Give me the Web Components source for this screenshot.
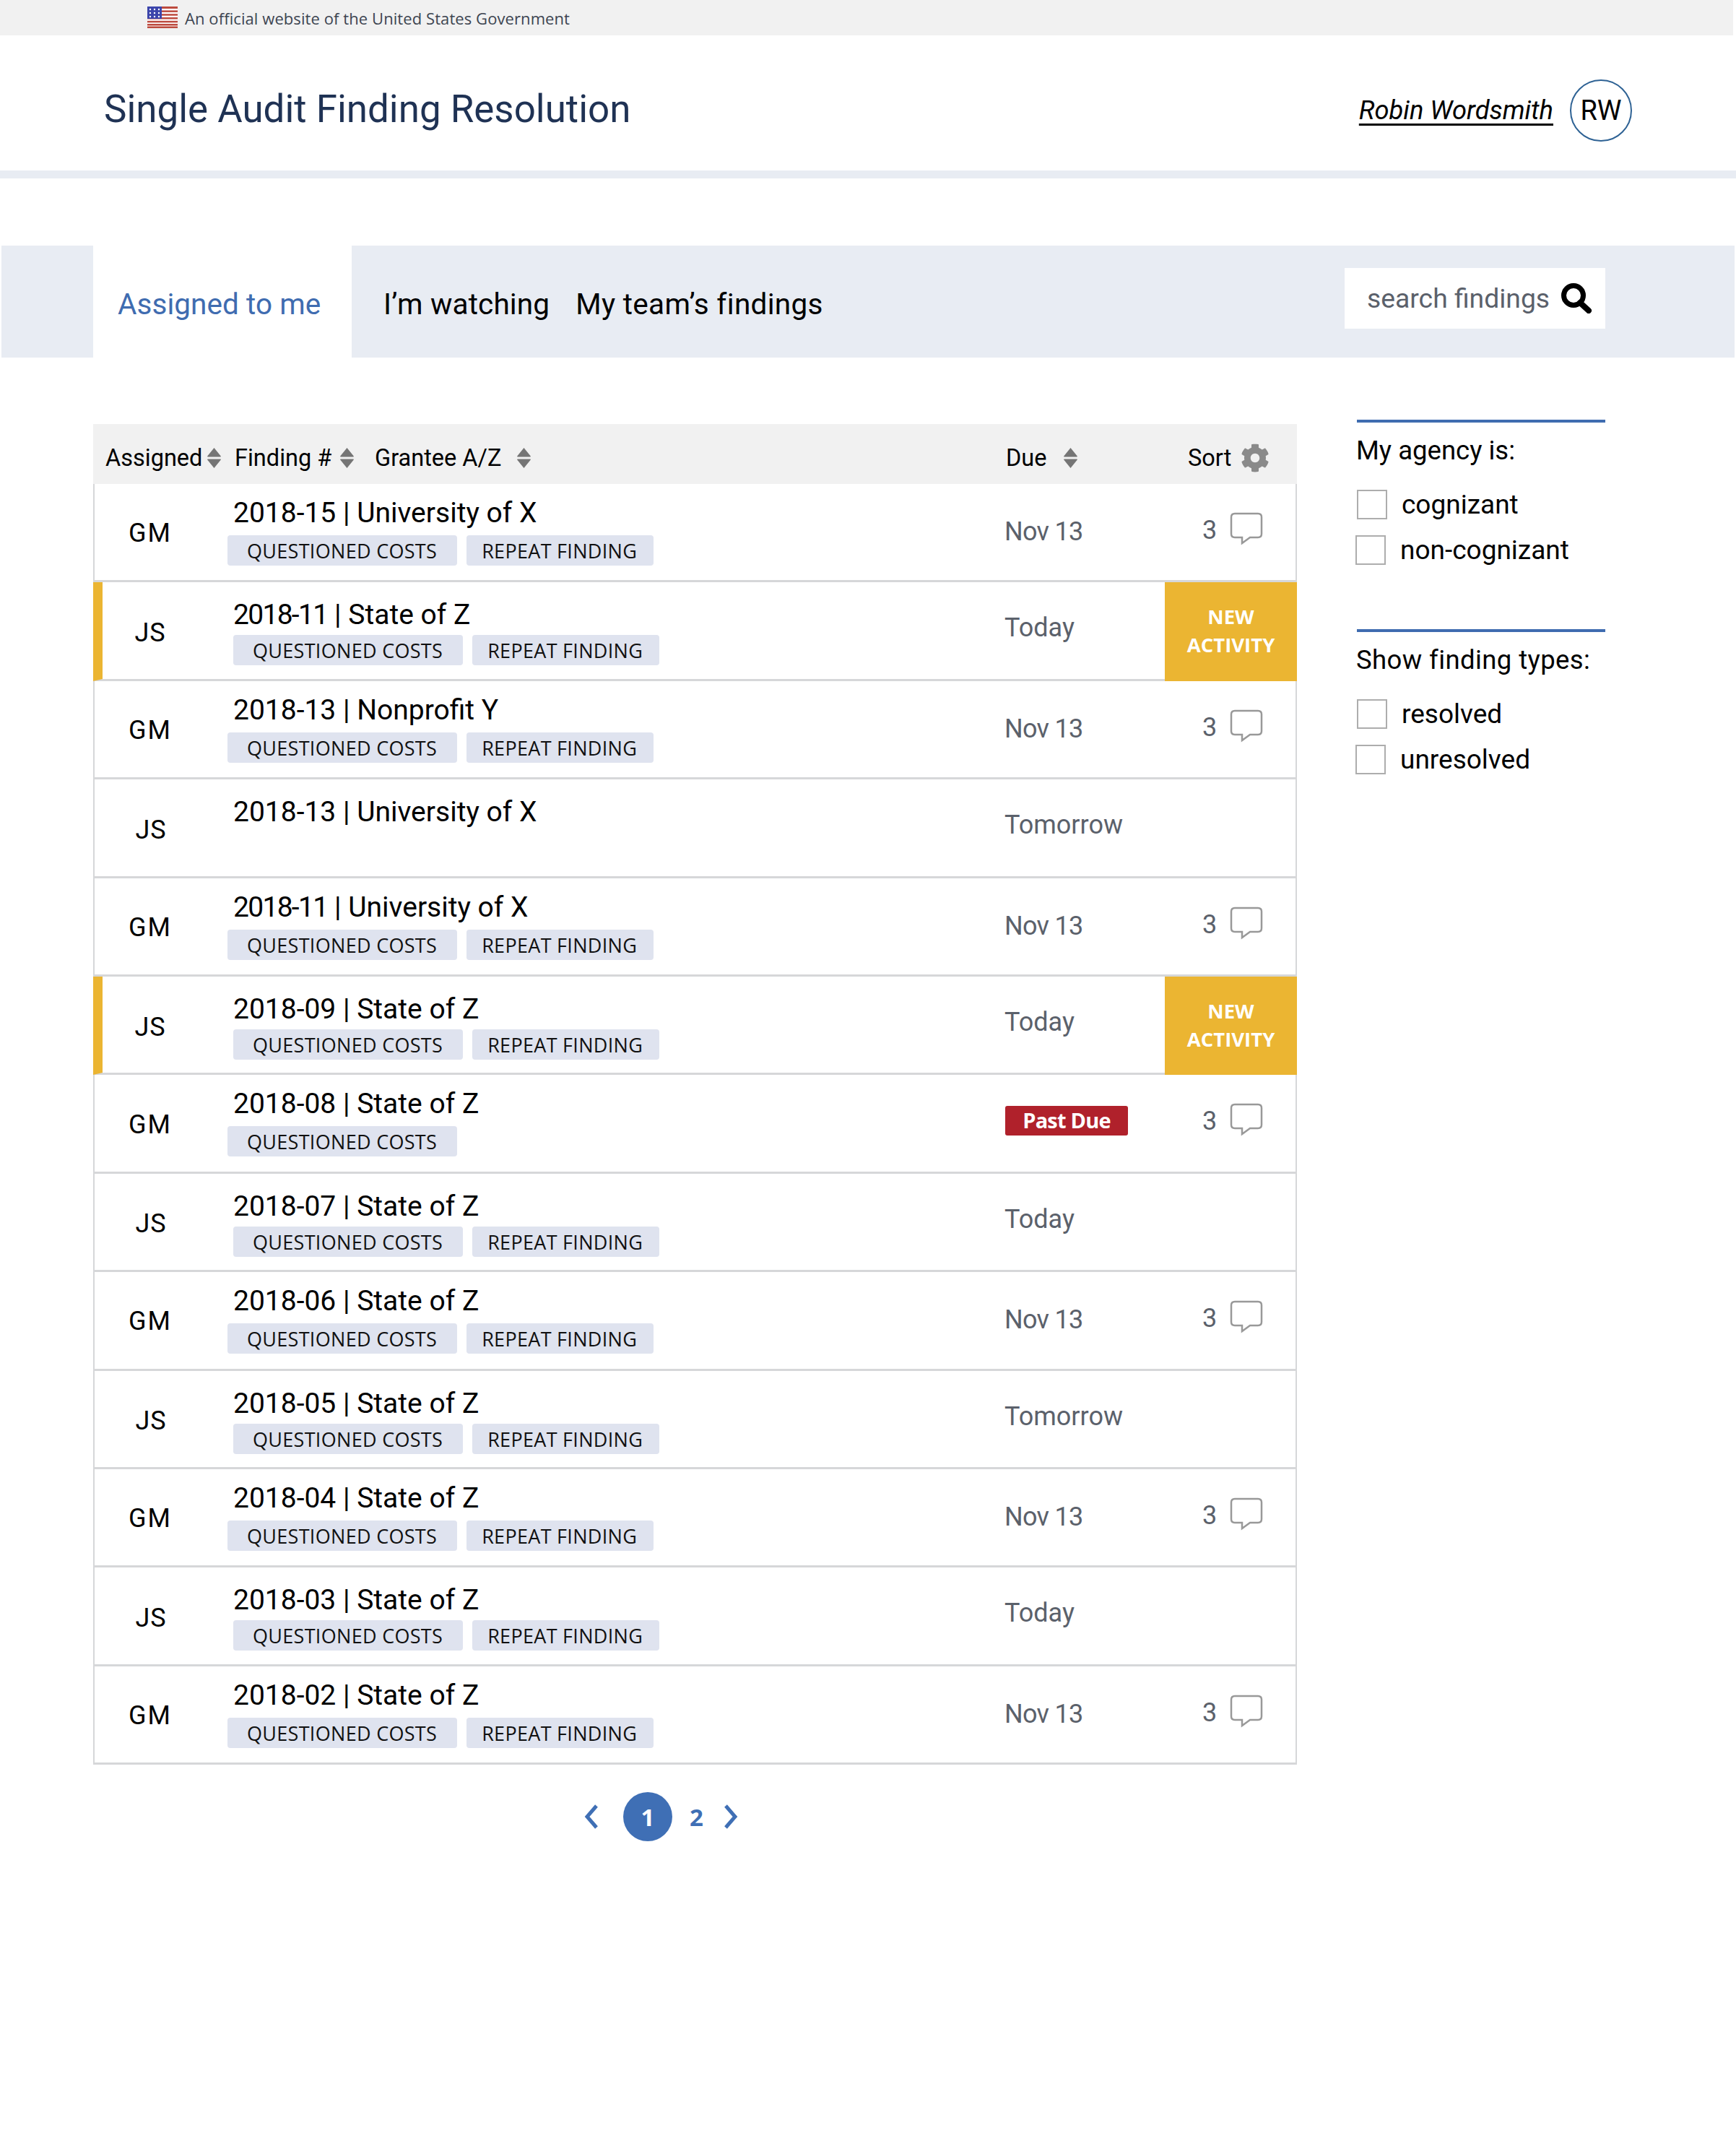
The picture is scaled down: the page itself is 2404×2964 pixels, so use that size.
<!DOCTYPE html>
<html lang="en">
<head>
<meta charset="utf-8">
<title>Single Audit Finding Resolution</title>
<style>
  html, body { margin: 0; background: #fff; }
  body { min-height: 2964px; font-family: Roboto, "Liberation Sans", sans-serif; color: #000; }
</style>
</head>
<body>
<gov-banner>An official website of the United States Government</gov-banner>
<app-header name="Robin Wordsmith" initials="RW">Single Audit Finding Resolution</app-header>
<tab-bar></tab-bar>
<main-area>
  <finding-table>
    <finding-row who="GM" name="2018-15 | University of X" due="Nov 13" comments="3"><finding-tag>QUESTIONED COSTS</finding-tag><finding-tag>REPEAT FINDING</finding-tag></finding-row>
    <finding-row who="JS" fresh tight name="2018-11 | State of Z" due="Today"><finding-tag>QUESTIONED COSTS</finding-tag><finding-tag>REPEAT FINDING</finding-tag></finding-row>
    <finding-row who="GM" name="2018-13 | Nonprofit Y" due="Nov 13" comments="3"><finding-tag>QUESTIONED COSTS</finding-tag><finding-tag>REPEAT FINDING</finding-tag></finding-row>
    <finding-row who="JS" name="2018-13 | University of X" due="Tomorrow"></finding-row>
    <finding-row who="GM" tight name="2018-11 | University of X" due="Nov 13" comments="3"><finding-tag>QUESTIONED COSTS</finding-tag><finding-tag>REPEAT FINDING</finding-tag></finding-row>
    <finding-row who="JS" fresh name="2018-09 | State of Z" due="Today"><finding-tag>QUESTIONED COSTS</finding-tag><finding-tag>REPEAT FINDING</finding-tag></finding-row>
    <finding-row who="GM" name="2018-08 | State of Z" late comments="3"><finding-tag>QUESTIONED COSTS</finding-tag></finding-row>
    <finding-row who="JS" name="2018-07 | State of Z" due="Today"><finding-tag>QUESTIONED COSTS</finding-tag><finding-tag>REPEAT FINDING</finding-tag></finding-row>
    <finding-row who="GM" name="2018-06 | State of Z" due="Nov 13" comments="3"><finding-tag>QUESTIONED COSTS</finding-tag><finding-tag>REPEAT FINDING</finding-tag></finding-row>
    <finding-row who="JS" name="2018-05 | State of Z" due="Tomorrow"><finding-tag>QUESTIONED COSTS</finding-tag><finding-tag>REPEAT FINDING</finding-tag></finding-row>
    <finding-row who="GM" name="2018-04 | State of Z" due="Nov 13" comments="3"><finding-tag>QUESTIONED COSTS</finding-tag><finding-tag>REPEAT FINDING</finding-tag></finding-row>
    <finding-row who="JS" name="2018-03 | State of Z" due="Today"><finding-tag>QUESTIONED COSTS</finding-tag><finding-tag>REPEAT FINDING</finding-tag></finding-row>
    <finding-row who="GM" name="2018-02 | State of Z" due="Nov 13" comments="3"><finding-tag>QUESTIONED COSTS</finding-tag><finding-tag>REPEAT FINDING</finding-tag></finding-row>
  </finding-table>
  <side-panel>
    <filter-group label="My agency is:"><check-option>cognizant</check-option><check-option shifted>non-cognizant</check-option></filter-group>
    <filter-group style="--label-ls:.4px" label="Show finding types:"><check-option>resolved</check-option><check-option shifted>unresolved</check-option></filter-group>
  </side-panel>
</main-area>
<page-nav></page-nav>

<script>
  const CARET = `<svg class="caret" width="21" height="28" viewBox="0 0 20 27"><path d="M10 0 L19 11 Q19.500 12 18 12 H2 Q.5 12 1 11Z M1 16 Q.5 15 2 15 H18 Q19.500 15 19 16 L10 27Z" fill="#757575"/></svg>`;
  const GEAR = `<svg width="40" height="40" viewBox="0 0 512 512"><path fill="#8a8a8a" d="M487.4 315.7l-42.6-24.6c4.3-23.2 4.3-47 0-70.2l42.6-24.6c4.9-2.8 7.1-8.6 5.5-14-11.1-35.6-30-67.8-54.7-94.6-3.8-4.1-10-5.1-14.8-2.3L380.8 110c-17.9-15.4-38.5-27.3-60.8-35.1V25.8c0-5.6-3.9-10.5-9.4-11.7-36.7-8.2-74.3-7.8-109.2 0-5.5 1.2-9.4 6.1-9.4 11.7V75c-22.2 7.9-42.8 19.8-60.8 35.1L88.7 85.5c-4.9-2.8-11-1.9-14.8 2.3-24.7 26.7-43.6 58.9-54.7 94.6-1.7 5.4.6 11.2 5.5 14L67.3 221c-4.3 23.2-4.3 47 0 70.2l-42.6 24.6c-4.9 2.8-7.1 8.6-5.5 14 11.1 35.6 30 67.8 54.7 94.6 3.8 4.1 10 5.1 14.8 2.3l42.6-24.6c17.9 15.4 38.5 27.3 60.8 35.1v49.2c0 5.6 3.9 10.5 9.4 11.7 36.7 8.2 74.3 7.8 109.2 0 5.5-1.2 9.4-6.1 9.4-11.7v-49.2c22.2-7.900 42.8-19.8 60.8-35.1l42.6 24.6c4.9 2.8 11 1.9 14.8-2.3 24.7-26.7 43.6-58.9 54.7-94.6 1.5-5.5-.7-11.3-5.6-14.1zM256 336c-44.1 0-80-35.9-80-80s35.9-80 80-80 80 35.9 80 80-35.9 80-80 80z"/></svg>`;

  class GovBanner extends HTMLElement {
    connectedCallback() {
      this.attachShadow({mode: "open"}).innerHTML = `
      <style>
        :host { display: flex; align-items: center; gap: 10px; height: 49px; padding-left: 204px; background: #f1f1f1;
          font: 22px "Open Sans", sans-serif; letter-spacing: .08px; color: #3d4551; box-sizing: border-box; margin-right: 4px; }
        svg { display: block; margin-top: -1px; }
      </style>
      <svg width="42" height="30" viewBox="0 0 42 30">
        <rect width="42" height="30" fill="#fff"/>
        <g fill="#bd4b3f"><rect width="42" height="3"/><rect y="5.400" width="42" height="2.500"/><rect y="10.200" width="42" height="2.500"/><rect y="15" width="42" height="2.500"/><rect y="19.800" width="42" height="2.500"/><rect y="24" width="42" height="2.500"/><rect y="27.500" width="42" height="2.500"/></g>
        <rect width="20" height="17" fill="#3c45ab"/>
        <g fill="#fff"><circle cx="4" cy="4" r="1.200"/><circle cx="10" cy="4" r="1.200"/><circle cx="16" cy="4" r="1.200"/><circle cx="4" cy="9" r="1.200"/><circle cx="10" cy="9" r="1.200"/><circle cx="16" cy="9" r="1.200"/><circle cx="4" cy="14" r="1.200"/><circle cx="10" cy="14" r="1.200"/><circle cx="16" cy="14" r="1.200"/></g>
      </svg>
      <slot></slot>`;
    }
  }

  class AppHeader extends HTMLElement {
    connectedCallback() {
      this.attachShadow({mode: "open"}).innerHTML = `
      <style>
        :host { display: flex; align-items: center; justify-content: space-between; height: 198px; box-sizing: border-box;
          border-bottom: 11px solid #e8ecf3; padding: 20px 144px 0 144px; background: #fff; }
        h1 { margin: 0 0 3px; font: 400 52.900px Roboto, sans-serif; color: #1f3254; }
        .user { display: flex; align-items: center; gap: 23px; }
        a { font: italic 400 36.300px Roboto, sans-serif; color: #000; text-decoration: underline; text-underline-offset: 6px; }
        .avatar { width: 86px; height: 86px; box-sizing: border-box; border: 2px solid #2e6294; border-radius: 50%;
          display: flex; align-items: center; justify-content: center; font: 38px Roboto, sans-serif; }
      </style>
      <h1><slot></slot></h1>
      <div class="user"><a>${this.getAttribute("name")}</a><div class="avatar">${this.getAttribute("initials")}</div></div>`;
    }
  }

  class TabBar extends HTMLElement {
    connectedCallback() {
      this.attachShadow({mode: "open"}).innerHTML = `
      <style>
        :host { display: flex; height: 155px; margin: 93px 2px 0; background: #e8ecf3; padding-left: 127px; padding-right: 179px;
          font: 40.500px Roboto, sans-serif; }
        .tab { display: flex; align-items: center; padding-top: 6px; }
        .on { width: 358px; padding-left: 34px; box-sizing: border-box; background: #fff; color: #3f6cb0; letter-spacing: .05px; }
        .first { margin-left: 44px; letter-spacing: .15px; }
        .second { margin-left: 36px; letter-spacing: .3px; }
        .search { margin-left: auto; align-self: flex-start; margin-top: 31px; width: 361px; height: 84px; box-sizing: border-box;
          background: #fff; display: flex; align-items: center; padding-left: 31px; gap: 15px; font-size: 37.300px; color: #5b616b; }
      </style>
      <div class="tab on">Assigned to me</div>
      <div class="tab first">I’m watching</div>
      <div class="tab second">My team’s findings</div>
      <div class="search"><span>search findings</span>
        <svg width="44" height="42" viewBox="0 0 44 42"><circle cx="18" cy="17" r="13.500" fill="none" stroke="#000" stroke-width="7"/><path d="M27 27 L39 38" stroke="#000" stroke-width="8" stroke-linecap="round"/></svg>
      </div>`;
    }
  }

  class MainArea extends HTMLElement {
    connectedCallback() {
      this.attachShadow({mode: "open"}).innerHTML = `
      <style>:host { display: flex; align-items: flex-start; gap: 83px; padding: 86px 0 0 129px; }</style>
      <slot></slot>`;
    }
  }

  class FindingTable extends HTMLElement {
    connectedCallback() {
      this.attachShadow({mode: "open"}).innerHTML = `
      <style>
        :host { display: block; width: 1667px; margin-top: 6px; }
        .head { display: flex; align-items: center; height: 83px; padding-top: 10px; box-sizing: border-box; background: #f1f1f1; font: 32.500px Roboto, sans-serif; }
        .head span { display: inline-flex; align-items: center; }
        .a { margin-left: 17px; gap: 6px; width: 162px; }
        .b { margin-left: 17px; gap: 11px; width: 175px; }
        .c { gap: 21px; width: 874px; margin-left: 19px; }
        .d { gap: 23px; width: 250px; }
        .e { gap: 13px; margin-left: 2px; }
      </style>
      <div class="head">
        <span class="a">Assigned${CARET}</span>
        <span class="b">Finding #${CARET}</span>
        <span class="c">Grantee A/Z${CARET}</span>
        <span class="d">Due${CARET}</span>
        <span class="e">Sort${GEAR}</span>
      </div>
      <slot></slot>`;
    }
  }

  class FindingRow extends HTMLElement {
    connectedCallback() {
      const who = this.getAttribute("who");
      const fresh = this.hasAttribute("fresh");
      const late = this.hasAttribute("late");
      const n = this.getAttribute("comments");
      const [num, grantee] = this.getAttribute("name").split(" | ");
      let last = "";
      if (fresh) last = `<div class="new">NEW<br>ACTIVITY</div>`;
      else if (n) last = `<div class="count"><span>${n}</span>
        <svg width="46" height="46" viewBox="0 0 46 46"><path d="M7 2 H39 Q44 2 44 7 V30 Q44 35 39 35 H28 L17 43 L17 35 H7 Q2 35 2 30 V7 Q2 2 7 2Z" fill="none" stroke="#999" stroke-width="2.500"/></svg></div>`;
      this.attachShadow({mode: "open"}).innerHTML = `
      <style>
        :host { display: grid; grid-template-columns: 184px 1077px 221px 1fr; height: 136.4px; box-sizing: border-box;
          border: solid #d6d7d9; border-width: 0 2px 3px; font-family: Roboto, sans-serif; background: #fff; }
        :host([fresh]) { border-left: 13px solid #ebb532; border-right-color: #ebb532; grid-template-columns: 173px 1077px 221px 1fr; }
        .who { align-self: center; text-align: center; padding-right: 30px; font-size: 36px; letter-spacing: 2px; margin-top: 3px; }
        :host([who="JS"]) .who { margin-top: 6px; padding-right: 28px; letter-spacing: 1px; }
        :host([fresh]) .who { padding-right: 41px; }
        .main { padding-top: 17px; }
        .name { font-size: 39px; line-height: 46px; margin-left: 8px; margin-bottom: 8px; white-space: nowrap; }
        :host([tight]) .num { letter-spacing: -1.700px; }
        .tags { display: flex; gap: 13px; }
        ::slotted(finding-tag:nth-child(2)) { padding: 0 23px 0 21px; }
        :host([who="JS"]) .main { padding-top: 22px; padding-left: 8px; }
        :host([who="JS"]) .name { margin-left: 0; margin-bottom: 5px; }
        .due { font-size: 36px; color: #5b616b; padding-top: 45px; margin-left: -1px; }
        :host([comments]) .due { letter-spacing: -.7px; }
        :host([who="JS"]) .due { padding-top: 42px; }
        :host([late]) .due { padding-top: 43px; margin-left: 0; }
        .late { display: block; width: 170px; height: 41px; text-align: center; border-radius: 3px;
          background: #b0212b; color: #fff; font: 700 29px/40px "Open Sans", sans-serif; letter-spacing: -.8px; }
        .count { display: flex; gap: 18px; align-items: flex-start; padding: 40px 0 0 52px; font-size: 36px; color: #5b616b; }
        .count span { margin-top: 3px; }
        .count svg { display: block; margin-top: -1px; }
        .new { background: #ebb532; color: #fff; margin-bottom: -3px; margin-right: -2px; text-align: center; padding-top: 28px; box-sizing: border-box;
          font: 700 27.500px/39px "Open Sans", sans-serif; }
      </style>
      <div class="who">${who}</div>
      <div class="main"><div class="name"><span class="num">${num}</span> | ${grantee}</div><div class="tags"><slot></slot></div></div>
      <div class="due">${late ? `<span class="late">Past Due</span>` : this.getAttribute("due")}</div>
      ${last}`;
    }
  }

  class FindingTag extends HTMLElement {
    connectedCallback() {
      this.attachShadow({mode: "open"}).innerHTML = `
      <style>
        :host { display: block; height: 42px; padding: 0 28px 0 27px; background: #dfe3ef; border-radius: 4px; color: #111;
          font: 27px/44px "Open Sans", sans-serif; letter-spacing: .3px; white-space: nowrap; }
      </style>
      <slot></slot>`;
    }
  }

  class SidePanel extends HTMLElement {
    connectedCallback() {
      this.attachShadow({mode: "open"}).innerHTML = `
      <style>:host { display: flex; flex-direction: column; gap: 89px; width: 344px; }</style>
      <slot></slot>`;
    }
  }

  class FilterGroup extends HTMLElement {
    connectedCallback() {
      this.attachShadow({mode: "open"}).innerHTML = `
      <style>
        :host { display: block; border-top: 4px solid #3f6cb0; padding-top: 18px; font: 36.500px Roboto, sans-serif; }
        .label { line-height: 42px; margin: 0 0 32px -1px; letter-spacing: var(--label-ls, 0); }
        .opts { display: flex; flex-direction: column; gap: 21px; }
      </style>
      <div class="label">${this.getAttribute("label")}</div>
      <div class="opts"><slot></slot></div>`;
    }
  }

  class CheckOption extends HTMLElement {
    connectedCallback() {
      this.attachShadow({mode: "open"}).innerHTML = `
      <style>
        :host { display: flex; align-items: center; gap: 20px; height: 42px; font: 37px Roboto, sans-serif; }
        :host([shifted]) { margin-left: -2px; }
        i { display: block; width: 42px; height: 41px; box-sizing: border-box; border: 2px solid #adadad; background: #fff; }
      </style>
      <i></i><slot></slot>`;
    }
  }

  class PageNav extends HTMLElement {
    connectedCallback() {
      this.attachShadow({mode: "open"}).innerHTML = `
      <style>
        :host { display: flex; align-items: center; width: 1667px; box-sizing: border-box; height: 68px; margin-top: 38px; padding-left: 809px;
          color: #3f6fb5; font: 700 33px "Open Sans", sans-serif; }
        svg { display: block; }
        .cur { width: 68px; height: 68px; border-radius: 50%; background: #3f6fb5; color: #fff; display: flex; align-items: center; justify-content: center; margin: 0 24px 0 34px; }
        .two { margin-right: 28px; }
      </style>
      <svg width="20" height="34" viewBox="0 0 20 34"><path d="M17 2 L4 17 L17 32" fill="none" stroke="#3f6fb5" stroke-width="5"/></svg>
      <div class="cur">1</div><div class="two">2</div>
      <svg width="20" height="34" viewBox="0 0 20 34"><path d="M3 2 L16 17 L3 32" fill="none" stroke="#3f6fb5" stroke-width="5"/></svg>`;
    }
  }

  customElements.define("gov-banner", GovBanner);
  customElements.define("app-header", AppHeader);
  customElements.define("tab-bar", TabBar);
  customElements.define("main-area", MainArea);
  customElements.define("finding-table", FindingTable);
  customElements.define("finding-row", FindingRow);
  customElements.define("finding-tag", FindingTag);
  customElements.define("side-panel", SidePanel);
  customElements.define("filter-group", FilterGroup);
  customElements.define("check-option", CheckOption);
  customElements.define("page-nav", PageNav);
</script>
</body>
</html>
